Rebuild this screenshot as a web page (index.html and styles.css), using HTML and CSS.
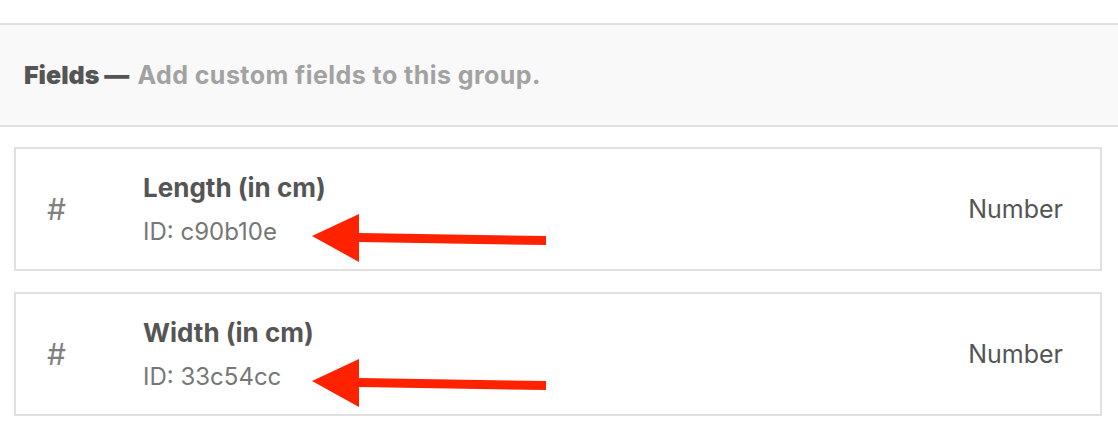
FILE: index.html
```html
<!DOCTYPE html>
<html lang="en">
<head>
  <meta charset="UTF-8" />
  <meta name="viewport" content="width=device-width, initial-scale=1.0" />
  <title>Fields</title>
  <link rel="stylesheet" href="styles.css">
</head>
<body>
  <section class="panel">
    <header class="panel-head">
      <strong>Fields —</strong> <span class="hint">Add custom fields to this group.</span>
    </header>

    <div class="field-list">
      <div class="field">
        <div class="field-icon">#</div>
        <div class="field-info">
          <div class="field-name">Length (in cm)</div>
          <div class="field-id">ID: c90b10e</div>
        </div>
        <div class="field-type">Number</div>
        <svg class="arrow" width="240" height="56" viewBox="0 0 240 56">
          <polygon points="2,26 49,4 49,23 236,26 236,35 49,32 49,52" />
        </svg>
      </div>

      <div class="field">
        <div class="field-icon">#</div>
        <div class="field-info">
          <div class="field-name">Width (in cm)</div>
          <div class="field-id">ID: 33c54cc</div>
        </div>
        <div class="field-type">Number</div>
        <svg class="arrow" width="240" height="56" viewBox="0 0 240 56">
          <polygon points="2,26 49,4 49,23 236,26 236,35 49,32 49,52" />
        </svg>
      </div>
    </div>
  </section>
</body>
</html>
```

FILE: styles.css
```css
:root {
  --border: #e0e0e0;
  --head-bg: #f9f9f9;
  --text: #555555;
  --muted: #a2a2a2;
  --arrow: #ff2200;
}

body {
  font-family: 'Inter', 'Liberation Sans', sans-serif;
  background: #ffffff;
  color: var(--text);
  margin: 0;
  padding: 0;
}

.panel {
  margin-top: 23px;
  border-top: 2px solid var(--border);
}

.panel-head {
  background: var(--head-bg);
  border-bottom: 2px solid var(--border);
  height: 100px;
  display: flex;
  align-items: center;
  gap: 8px;
  padding: 0 24px;
  font-size: 25px;
  font-weight: 700;
}

.hint {
  color: var(--muted);
  letter-spacing: 0.45px;
}

.field-list {
  display: flex;
  flex-direction: column;
  gap: 21px;
  padding: 20px 16px 20px 14px;
}

.field {
  position: relative;
  display: flex;
  align-items: center;
  height: 120px;
  border: 2px solid var(--border);
}

.field-icon {
  width: 127px;
  padding-left: 31px;
  box-sizing: border-box;
  font-size: 30px;
  color: #808080;
}

.field-info {
  flex: 1;
  display: flex;
  flex-direction: column;
  gap: 15px;
}

.field-name {
  font-size: 26px;
  font-weight: 700;
  line-height: 30px;
}

.field-id {
  font-size: 24px;
  line-height: 28px;
  color: #777;
}

.field-type {
  font-size: 25px;
  padding-right: 37px;
}

.arrow {
  position: absolute;
  left: 294px;
  top: 61px;
}

.arrow polygon {
  fill: var(--arrow);
}
```
